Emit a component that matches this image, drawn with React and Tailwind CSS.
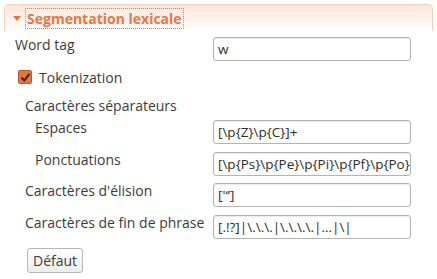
import React from "react";

// ── Ligne label + champ ──────────────────────────────────────────────
// Le label est calé un peu au-dessus du centre du champ, comme dans GTK.
function FieldRow({ label, value, indent = "pl-[25px]", top = "mt-0" }) {
    return (
        <div className={`flex items-start h-[24px] ${top}`}>
            <div className={`w-[213px] shrink-0 ${indent} whitespace-nowrap leading-[16px]`}>
                {label}
            </div>
            <div className="w-[198px] h-[24px] rounded-[3px] border border-[#b3b3b3] bg-white shadow-[inset_0_1px_1px_rgba(0,0,0,0.08)] flex items-center overflow-hidden">
                <span className="pl-[4px] whitespace-nowrap text-[13.5px] text-[#2d2d2d]">{value}</span>
            </div>
        </div>
    );
}

export default function App() {
    return (
        <div
            className="w-[437px] h-[279px] bg-white text-[14px] text-[#3c3c3c] overflow-hidden"
            style={{ fontFamily: "'Open Sans', 'DejaVu Sans', sans-serif" }}
        >
            {/* ── En-tête de section ─────────────────────── */}
            <div className="mx-[4px] mt-[4px] h-[27px] rounded-t-[5px] border border-b-0 border-[#f6d2bf] bg-gradient-to-b from-[#fde6da] to-white flex items-center">
                <svg width="8" height="5" viewBox="0 0 8 5" className="ml-[8px] mr-[5px]">
                    <path d="M0 0 L8 0 L4 5 Z" fill="#e8743b" />
                </svg>
                <span className="font-bold text-[14px] text-[#ee7440] outline outline-1 outline-dotted outline-[#ee7440] px-[1px] leading-[19px]">
                    Segmentation lexicale
                </span>
            </div>

            <div className="pr-[26px]">
                <FieldRow label="Word tag" value="w" indent="pl-[15px]" top="mt-[6px]" />

                <div className="flex items-center h-[20px] mt-[6px] pl-[18px]">
                    <span className="w-[14px] h-[14px] rounded-[2px] bg-[#e8743b] border border-[#c9561f] flex items-center justify-center">
                        <svg width="11" height="11" viewBox="0 0 11 11">
                            <path d="M1.5 5.5 L4.3 8.5 L9.5 1.8" stroke="#2b2b2b" strokeWidth="2" fill="none" />
                        </svg>
                    </span>
                    <span className="ml-[7px]">Tokenization</span>
                </div>

                <div className="h-[20px] mt-[8px] pl-[25px] flex items-center">
                    Caractères séparateurs
                </div>

                <FieldRow label="Espaces" value="[\p{Z}\p{C}]+" indent="pl-[35px]" top="mt-[5px]" />
                <FieldRow
                    label="Ponctuations"
                    value="[\p{Ps}\p{Pe}\p{Pi}\p{Pf}\p{Po}\p{S}]"
                    indent="pl-[35px]"
                    top="mt-[8px]"
                />
                <FieldRow label="Caractères d'élision" value="['‘’]" top="mt-[7px]" />
                <FieldRow
                    label="Caractères de fin de phrase"
                    value="[.!?]|\.\.\.|\.\.\.\.|…|\|"
                    top="mt-[8px]"
                />

                <div className="pl-[27px] mt-[9px]">
                    <button
                        type="button"
                        className="h-[25px] px-[5px] rounded-[3px] border border-[#b8b8b8] bg-gradient-to-b from-white to-[#ededed] text-[#3c3c3c] leading-[20px]"
                    >
                        Défaut
                    </button>
                </div>
            </div>
        </div>
    );
}
